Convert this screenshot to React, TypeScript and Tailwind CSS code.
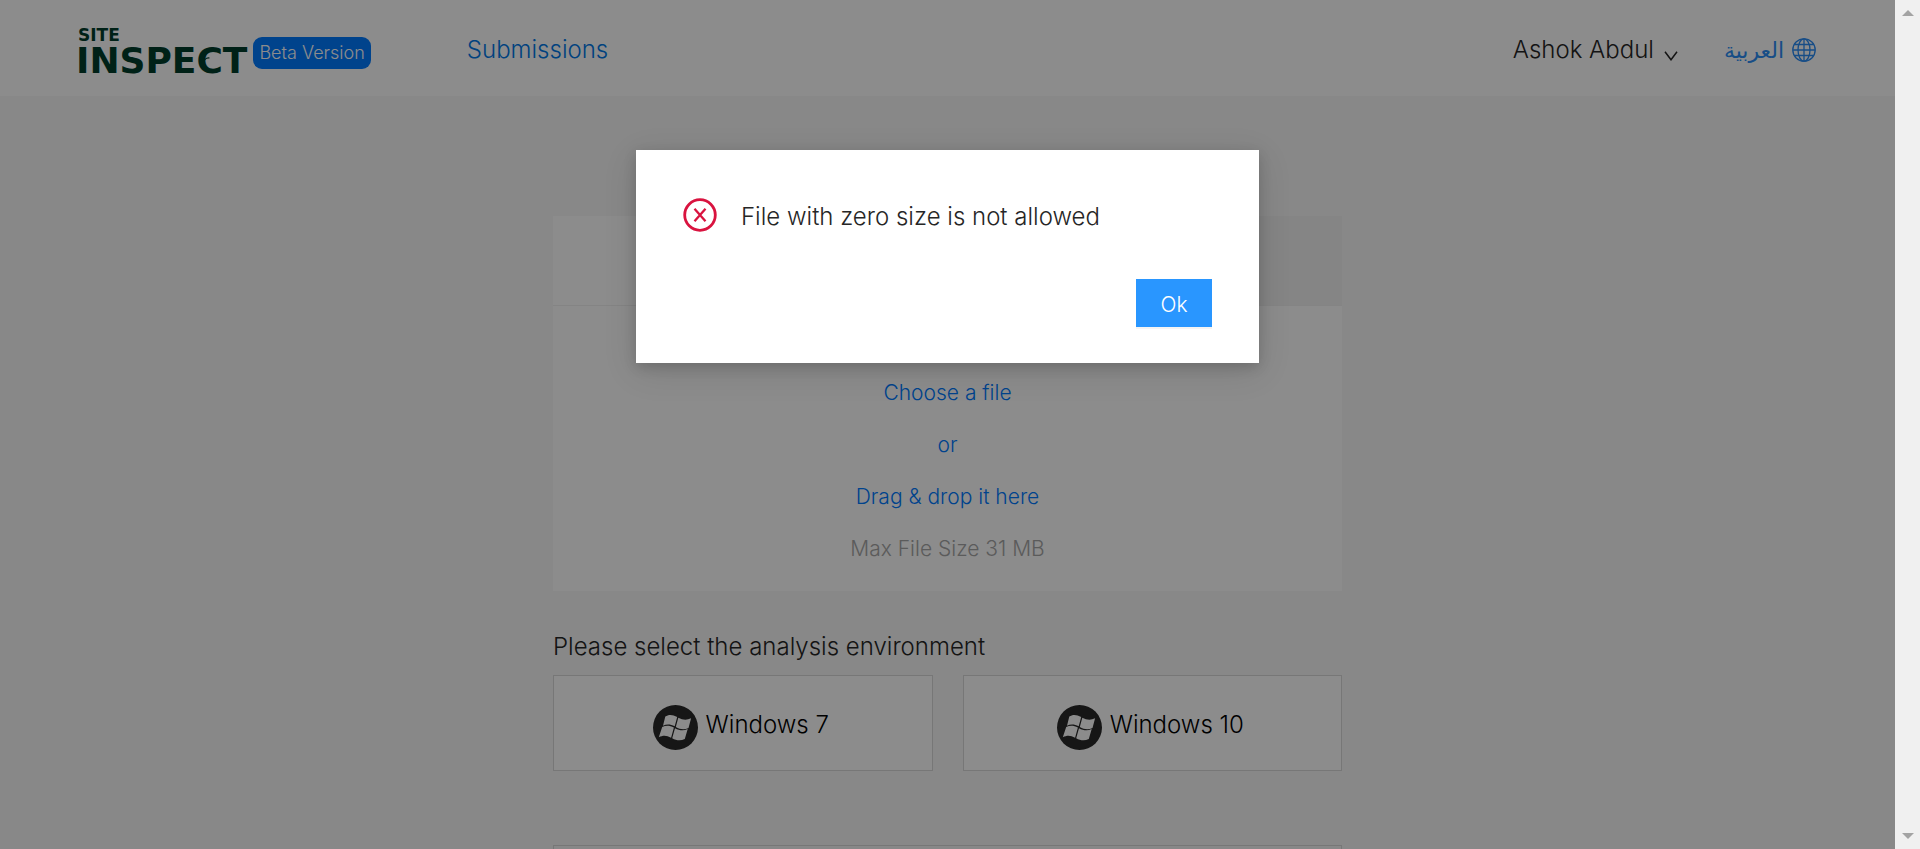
import React from "react";

function Logo() {
  return (
    <a href="#" aria-label="Site Inspect" className="flex flex-col font-['DejaVu_Sans',sans-serif] font-bold text-[#003d2b]">
      <span className="pl-0.5 text-[17px] leading-4">SITE</span>
      <span className="relative text-[36px] leading-9">
        INSPECT
        <svg viewBox="0 0 12 12" className="absolute top-3 right-8 size-3" fill="none" stroke="currentColor" strokeWidth="1.200">
          <path d="M1 9C0 5 3 2.500 6.500 3" />
        </svg>
      </span>
    </a>
  );
}

function Globe() {
  return (
    <svg viewBox="0 0 24 24" className="size-6" fill="none" stroke="currentColor" strokeWidth="1.300">
      <circle cx="12" cy="12" r="11.200" />
      <ellipse cx="12" cy="12" rx="6" ry="11.200" />
      <path d="M12 .8v22.400M.8 12h22.400M2.500 6.500h19M2.500 17.500h19" />
    </svg>
  );
}

function WindowsIcon() {
  return (
    <svg viewBox="0 0 45 45" className="size-[45px] shrink-0">
      <circle cx="22.500" cy="22.500" r="22.500" fill="#282828" />
      <g fill="#fff">
        <path d="M12.300 11.500c3.200-2.300 7.500-2.200 11.900.6l-2.500 9.200c-4.200-2.200-8.100-2.500-11.700-.5z" />
        <path d="M25.300 12.700c4.400 2.300 8.500 2.600 12.800.6l-2.600 9.700c-4 2-8.300 1.600-12.700-1z" />
        <path d="M9.200 22c3.800-2 7.600-1.700 11.700.5l-2.800 10.300c-4.300-2.500-8-2.800-12.300-.5z" />
        <path d="M22 23.200c4.400 2.400 8.500 2.800 12.700.9l-2.900 9.900c-4.200 2.200-8.500 1.600-12.600-.7z" />
      </g>
    </svg>
  );
}

function Environment({ name }: { name: string }) {
  return (
    <button className="flex h-24 flex-1 items-center justify-center gap-2 border border-[#d9d9d9] bg-white pt-2 pr-1 text-black">
      <WindowsIcon />
      <span className="pb-1">{name}</span>
    </button>
  );
}

function Header() {
  return (
    <header className="flex h-24 items-center bg-white pt-1 pr-[79px] pl-[76px]">
      <div className="flex items-center gap-1.5 pt-1.5">
        <Logo />
        <span className="rounded-[9px] bg-[#007aff] px-1.5 text-[18px] leading-8 text-white">Beta Version</span>
      </div>
      <nav className="ml-24">
        <a href="#" className="text-[#0078e7]">Submissions</a>
      </nav>
      <div className="ml-auto flex items-center gap-[46px]">
        <button className="flex items-center gap-2.5">
          Ashok Abdul
          <svg viewBox="0 0 14 10" className="mt-3 h-2.5 w-3.5" fill="none" stroke="currentColor" strokeWidth="1.500">
            <path d="M1 .8l6 8 6-8" />
          </svg>
        </button>
        <a href="#" className="flex items-center gap-2 text-[#2a8cf5]">
          <span lang="ar" dir="rtl" className="font-['DejaVu_Sans',sans-serif] text-[22px] font-normal">العربية</span>
          <Globe />
        </a>
      </div>
    </header>
  );
}

function UploadCard() {
  return (
    <section className="bg-white">
      <div className="flex h-[90px] border-b border-[#f0f0f0]">
        <div className="flex-1" />
        <div className="flex-1 bg-[#f3f3f3]" />
      </div>
      <div className="flex flex-col items-center pt-[61px] pb-4 text-[21px] leading-[52px] text-[#007aff]">
        <label className="cursor-pointer">
          Choose a file
          <input type="file" className="sr-only" />
        </label>
        <p>or</p>
        <p>Drag &amp; drop it here</p>
        <p className="text-[#a6a6a6]">Max File Size 31 MB</p>
      </div>
    </section>
  );
}

function ErrorDialog() {
  return (
    <div className="absolute inset-0 flex items-start justify-center bg-black/45 pt-[150px]">
      <div role="alertdialog" aria-modal="true" aria-labelledby="message" className="w-[623px] bg-white pt-12 pr-[47px] pb-9 pl-[47px] shadow-[0_4px_12px_rgba(0,0,0,0.15),0_8px_32px_rgba(0,0,0,0.12)]">
        <div className="flex items-start gap-6">
          <svg viewBox="0 0 34 34" className="size-[34px]" fill="none" stroke="#d9133f" strokeWidth="2.800">
            <circle cx="17" cy="17" r="15.300" />
            <path d="M11.500 10.800l11 12.400M22.500 10.800l-11 12.400" strokeWidth="2.300" />
          </svg>
          <p id="message" className="leading-[38px]">File with zero size is not allowed</p>
        </div>
        <div className="mt-[43px] flex justify-end">
          <button className="h-12 w-[76px] bg-[#2996ff] pt-1 text-[21px] text-white shadow-[0_2px_0_rgba(0,0,0,0.045)]">Ok</button>
        </div>
      </div>
    </div>
  );
}

function ScrollTrack() {
  return (
    <div aria-hidden="true" className="flex w-[25px] shrink-0 flex-col items-center justify-between bg-[#f0f0f0] py-2.5">
      <svg viewBox="0 0 12 6" className="h-1.5 w-3" fill="#a3a3a3"><path d="M0 6l6-6 6 6z" /></svg>
      <svg viewBox="0 0 12 6" className="h-1.5 w-3" fill="#a3a3a3"><path d="M0 0l6 6 6-6z" /></svg>
    </div>
  );
}

export default function App() {
  return (
    <div className="flex h-screen overflow-hidden font-['Inter','Liberation_Sans',sans-serif] text-[24px] font-light text-[#262626]">
      <div className="relative min-w-0 flex-1 overflow-hidden bg-[#f7f7f7]">
        <Header />
        <main className="mx-auto max-w-[789px] pt-[120px]">
          <UploadCard />
          <h2 className="mt-9 leading-10">Please select the analysis environment</h2>
          <div className="mt-2 flex gap-[30px]">
            <Environment name="Windows 7" />
            <Environment name="Windows 10" />
          </div>
          <section className="mt-[74px] h-24 border border-[#d9d9d9]" />
        </main>
        <ErrorDialog />
      </div>
      <ScrollTrack />
    </div>
  );
}
